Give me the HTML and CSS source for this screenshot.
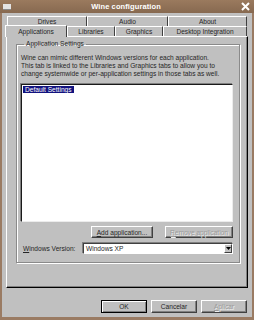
FILE: index.html
```html
<!DOCTYPE html>
<html lang="en">
<head>
    <meta charset="UTF-8">
    <title>Wine configuration</title>
    <link rel="stylesheet" href="styles.css">
</head>
<body>
    <div class="window">
        <div class="titlebar">
            <span class="menu-icon"></span>
            <span class="title">Wine configuration</span>
            <svg class="close" width="9" height="9" viewBox="0 0 9 9">
                <path d="M1 1 L8 8 M8 1 L1 8" stroke="#fff" stroke-width="2" fill="none"/>
            </svg>
        </div>

        <div class="content">
            <div class="tabs">
                <div class="tab-row">
                    <div class="tab tab-drives">Drives</div>
                    <div class="tab tab-audio">Audio</div>
                    <div class="tab tab-about">About</div>
                </div>
                <div class="tab-row">
                    <div class="tab tab-apps selected">Applications</div>
                    <div class="tab tab-libs">Libraries</div>
                    <div class="tab tab-graphics">Graphics</div>
                    <div class="tab tab-desktop">Desktop Integration</div>
                </div>
            </div>

            <div class="panel">
                <fieldset class="group">
                    <legend>Application Settings</legend>
                    <p class="intro">
                        Wine can mimic different Windows versions for each application.<br>
                        This tab is linked to the Libraries and Graphics tabs to allow you to<br>
                        change systemwide or per-application settings in those tabs as well.
                    </p>
                    <div class="list">
                        <span class="list-item selected">Default Settings</span>
                    </div>
                    <div class="app-buttons">
                        <button class="btn btn-add"><u>A</u>dd application...</button>
                        <button class="btn btn-remove" disabled><u>R</u>emove application</button>
                    </div>
                    <div class="version-row">
                        <label class="version-label"><u>W</u>indows Version:</label>
                        <div class="combo">
                            <span class="combo-text">Windows XP</span>
                            <span class="combo-arrow">
                                <svg width="5" height="3" viewBox="0 0 5 3"><path d="M0 0 H5 L2.5 3 Z" fill="#000"/></svg>
                            </span>
                        </div>
                    </div>
                </fieldset>
            </div>

            <div class="dialog-buttons">
                <button class="btn btn-dialog default">OK</button>
                <button class="btn btn-dialog">Cancelar</button>
                <button class="btn btn-dialog" disabled><u>A</u>plicar</button>
            </div>
        </div>
    </div>
</body>
</html>
```

FILE: styles.css
```css
* {
    box-sizing: border-box;
}

body {
    margin: 0;
    padding: 0;
    font-family: "Liberation Sans", Arial, sans-serif;
    font-size: 6.6px;
    color: #262626;
}

.window {
    width: 254px;
    height: 320px;
    display: flex;
    flex-direction: column;
    background-color: #c0c0c0;
    border: 0 solid #9a7b63;
    border-width: 0 2px 3px 2px;
}

.titlebar {
    height: 13px;
    margin: 0 -2px;
    padding: 0 4px 0 3px;
    display: flex;
    align-items: center;
    background: linear-gradient(#9a7a5e, #876950);
    color: #fff;
}

.menu-icon {
    width: 8px;
    height: 6px;
    background-color: #e4e4e4;
    border-bottom: 1px solid #8a8a8a;
}

.title {
    flex: 1;
    text-align: center;
    font-weight: bold;
    font-size: 7.5px;
    letter-spacing: 0.1px;
}

.close {
    display: block;
}

.content {
    flex: 1;
    display: flex;
    flex-direction: column;
    padding: 3px 4px 0 4px;
}

/* tabs */

.tab-row {
    display: flex;
    height: 10px;
    margin: 0 1px;
}

.tab {
    height: 10px;
    line-height: 9px;
    text-align: center;
    background-color: #c0c0c0;
    border-top: 1px solid #fff;
    border-left: 1px solid #fff;
    border-right: 1px solid #404040;
}

.tab-drives { width: 80px; }
.tab-audio { width: 81px; }
.tab-about { width: 79px; }

.tab-apps { width: 60px; }
.tab-libs { width: 48px; }
.tab-graphics { width: 48px; }
.tab-desktop { width: 84px; }

.tab.selected {
    position: relative;
    z-index: 1;
    width: 62px;
    height: 12px;
    margin: -1px 0 0 -2px;
    line-height: 11px;
}

/* panel */

.panel {
    height: 252px;
    display: flex;
    flex-direction: column;
    border-top: 1px solid #fff;
    border-left: 1px solid #fff;
    border-right: 1px solid #000;
    border-bottom: 1px solid #000;
    box-shadow: inset -1px -1px 0 #808080;
}

.group {
    flex: 1;
    margin: 3px 7px 24px 9px;
    padding: 0 6px 0 4px;
    border: 1px solid #8a8a8a;
    box-shadow: 1px 1px 0 #fff, inset 1px 1px 0 #fff;
}

.group legend {
    margin-left: 3px;
    padding: 0 2px;
    line-height: 8px;
}

.intro {
    margin: 6px 0 0 0;
    line-height: 8px;
    white-space: nowrap;
}

.list {
    height: 138px;
    margin-top: 6px;
    padding: 1px;
    background-color: #fff;
    border: 1px solid;
    border-color: #1a1a1a #ececec #ececec #1a1a1a;
    box-shadow: -1px -1px 0 #808080;
}

.list-item {
    display: inline-block;
    height: 7px;
    padding: 0 2px;
    line-height: 7px;
}

.list-item.selected {
    background-color: #12127e;
    color: #fff;
}

/* buttons */

.btn {
    height: 12px;
    padding: 0;
    font-family: inherit;
    font-size: inherit;
    color: #262626;
    background-color: #c0c0c0;
    border: 1px solid;
    border-color: #fff #404040 #404040 #fff;
    box-shadow: inset -1px -1px 0 #808080;
}

.btn:disabled {
    color: #9a9a9a;
    text-shadow: 1px 1px 0 #eee;
}

.app-buttons {
    display: flex;
    justify-content: flex-end;
    gap: 12px;
    margin-top: 4px;
}

.btn-add { width: 62px; }
.btn-remove { width: 68px; }

.version-row {
    display: flex;
    align-items: center;
    height: 11px;
    margin: 5px 0 7px 0;
}

.version-label {
    width: 62px;
    padding-left: 2px;
}

.combo {
    flex: 1;
    height: 11px;
    display: flex;
    align-items: center;
    background-color: #fff;
    border: 1px solid;
    border-color: #404040 #fff #fff #404040;
    box-shadow: -1px -1px 0 #808080;
}

.combo-text {
    flex: 1;
    padding-left: 2px;
}

.combo-arrow {
    width: 8px;
    height: 9px;
    display: flex;
    align-items: center;
    justify-content: center;
    background-color: #c0c0c0;
    border: 1px solid;
    border-color: #fff #404040 #404040 #fff;
}

.combo-arrow svg {
    display: block;
}

.dialog-buttons {
    display: flex;
    justify-content: flex-end;
    gap: 4px;
    margin: 12px 1px 0 0;
}

.btn-dialog {
    width: 46px;
    height: 13px;
}

.btn-dialog.default {
    border-color: #000;
    box-shadow: inset 1px 1px 0 #fff, inset -1px -1px 0 #808080;
}
```
